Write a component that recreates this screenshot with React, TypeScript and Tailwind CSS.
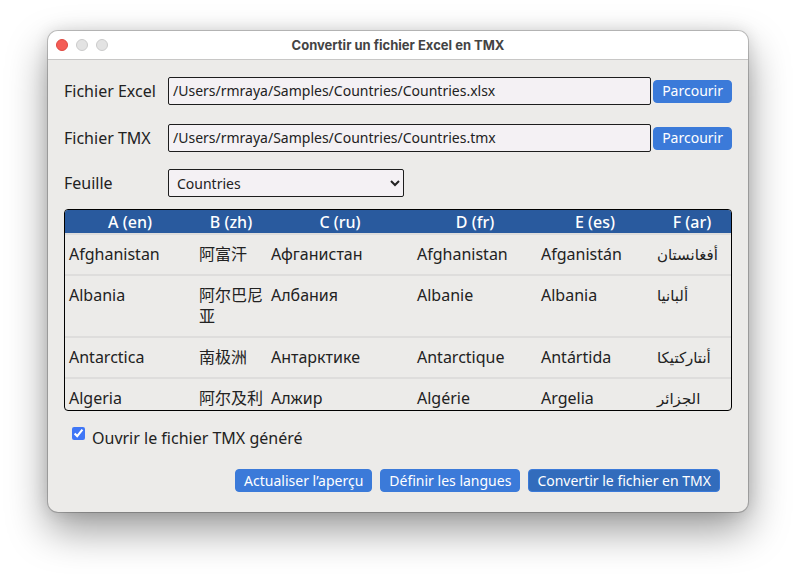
import type { ReactNode } from "react";

const columns = [
  { name: "A (en)", width: "w-[130px]" },
  { name: "B (zh)", width: "w-[72px]" },
  { name: "C (ru)", width: "w-[146px]" },
  { name: "D (fr)", width: "w-[124px]" },
  { name: "E (es)", width: "w-[116px]" },
  { name: "F (ar)", width: "w-[78px]" },
];

const rows = [
  ["Afghanistan", "阿富汗", "Афганистан", "Afghanistan", "Afganistán", "أفغانستان"],
  ["Albania", "阿尔巴尼亚", "Албания", "Albanie", "Albania", "ألبانيا"],
  ["Antarctica", "南极洲", "Антарктике", "Antarctique", "Antártida", "أنتاركتيكا"],
  ["Algeria", "阿尔及利亚", "Алжир", "Algérie", "Argelia", "الجزائر"],
];

function Button({ children, primary = false }: { children: ReactNode; primary?: boolean }) {
  const tone = primary ? "border-[#3b7ad9] bg-[#326cbc]" : "border-[#3b7ad9] bg-[#3b7ad9]";
  return (
    <button
      type="button"
      className={`h-[23px] shrink-0 rounded-[4px] border px-2 text-sm leading-5 whitespace-nowrap text-white ${tone}`}
    >
      {children}
    </button>
  );
}

function FileField({ id, label, path }: { id: string; label: string; path: string }) {
  return (
    <div className="flex items-center">
      <label htmlFor={id} className="w-[104px] shrink-0">
        {label}
      </label>
      <input
        id={id}
        type="text"
        defaultValue={path}
        className="mr-0.5 h-7 min-w-0 flex-1 rounded-[2px] border border-[#1d1d1d] bg-[#f4f1f4] px-1 pb-0.5 text-sm outline-none"
      />
      <Button>Parcourir</Button>
    </div>
  );
}

export default function App() {
  return (
    <div className="min-h-screen bg-white px-12 pt-[31px] pb-[62px] font-['Noto_Sans','Noto_Sans_CJK_SC','DejaVu_Sans',sans-serif] text-base leading-[21px] text-[#222]">
      <main className="overflow-hidden rounded-[10px] bg-[#ecebe9] shadow-[0_0_0_1px_rgba(0,0,0,0.2),0_18px_40px_rgba(0,0,0,0.4),0_0_16px_rgba(0,0,0,0.12)]">
        <header className="flex h-[29px] items-center border-b border-[#c8c7c6] bg-white px-2">
          <div className="flex flex-1 gap-2">
            <button type="button" aria-label="Fermer" className="size-3 rounded-full border border-[#de4840] bg-[#f45d56]" />
            <button type="button" aria-label="Réduire" className="size-3 rounded-full border border-[#cbcbcb] bg-[#e3e3e3]" />
            <button type="button" aria-label="Agrandir" className="size-3 rounded-full border border-[#cbcbcb] bg-[#e3e3e3]" />
          </div>
          <h1 className="font-['Inter',sans-serif] text-[13px] font-bold text-[#444]">Convertir un fichier Excel en TMX</h1>
          <div className="flex-1" />
        </header>

        <form className="px-4 pt-[17px] pb-5">
          <div className="flex flex-col gap-[19px]">
            <FileField id="excel" label="Fichier Excel" path="/Users/rmraya/Samples/Countries/Countries.xlsx" />
            <FileField id="tmx" label="Fichier TMX" path="/Users/rmraya/Samples/Countries/Countries.tmx" />
          </div>
          <div className="mt-[17px] flex items-center">
            <label htmlFor="sheet" className="w-[104px] shrink-0">
              Feuille
            </label>
            <select id="sheet" className="h-7 w-[236px] rounded-[2px] border border-[#1d1d1d] bg-[#f4f1f4] px-1 text-sm">
              <option>Countries</option>
            </select>
          </div>

          <div className="mt-3 h-[202px] overflow-hidden rounded-[4px] border border-black">
            <table className="w-full table-fixed border-collapse">
              <thead className="bg-[#295a9e] text-white">
                <tr className="h-[24px]">
                  {columns.map((column) => (
                    <th key={column.name} className={`p-0 pt-0.5 font-medium ${column.width}`}>
                      {column.name}
                    </th>
                  ))}
                </tr>
              </thead>
              <tbody>
                {rows.map((row) => (
                  <tr key={row[0]} className="border-t-2 border-[#dedddc]">
                    {row.map((cell, index) => (
                      <td key={index} className={`px-1 pt-[9px] pb-[9px] align-top ${index === 5 ? "text-[15px] leading-[21px]" : ""}`}>
                        {cell}
                      </td>
                    ))}
                  </tr>
                ))}
              </tbody>
            </table>
          </div>

          <div className="mt-4 flex items-start gap-[7px] pl-2">
            <input id="open" type="checkbox" defaultChecked className="size-[13px] accent-[#3f76f6]" />
            <label htmlFor="open" className="pt-px">
              Ouvrir le fichier TMX généré
            </label>
          </div>

          <div className="mt-5 flex justify-end gap-2 pr-3">
            <Button>Actualiser l’aperçu</Button>
            <Button>Définir les langues</Button>
            <Button primary>Convertir le fichier en TMX</Button>
          </div>
        </form>
      </main>
    </div>
  );
}
